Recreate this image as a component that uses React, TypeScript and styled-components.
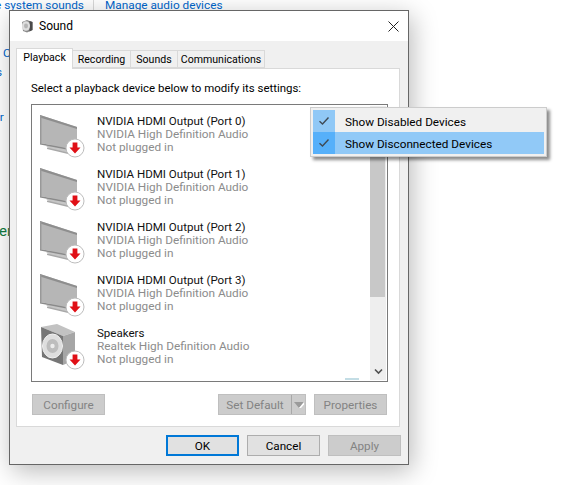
import React from "react";
import styled, { createGlobalStyle } from "styled-components";

const Global = createGlobalStyle`
  html, body { margin: 0; padding: 0; background: #fff; }
  * { box-sizing: border-box; }
`;

const font = `"Roboto", "Noto Sans", sans-serif`;

const Desktop = styled.div`
  position: relative;
  width: 568px;
  height: 485px;
  overflow: hidden;
  background: #fff;
  font-family: ${font};
  font-size: 12px;
`;

const BackText = styled.span<{ $x: number; $y: number; $size?: number; $color?: string }>`
  position: absolute;
  left: ${(p) => p.$x}px;
  top: ${(p) => p.$y}px;
  font-size: ${(p) => p.$size ?? 11.8}px;
  line-height: 16px;
  color: ${(p) => p.$color ?? "#0066cc"};
  white-space: nowrap;
`;

const BackDivider = styled.div`
  position: absolute;
  left: 93px;
  top: 0;
  width: 1px;
  height: 10px;
  background: #d9d9d9;
`;

const Dialog = styled.div`
  position: absolute;
  left: 9px;
  top: 10px;
  width: 400px;
  height: 455px;
  border: 1px solid #666;
  background: #f0f0f0;
  display: flex;
  flex-direction: column;
  box-shadow: 3px 6px 24px rgba(0, 0, 0, 0.28);
`;

const TitleBar = styled.div`
  height: 30px;
  background: #fff;
  display: flex;
  align-items: center;
  padding: 0 9px 0 10px;
  gap: 5px;
  flex: none;
`;

const TitleText = styled.div`
  flex: 1;
  font-size: 12px;
  color: #000;
`;

const Body = styled.div`
  flex: 1;
  display: flex;
  flex-direction: column;
  padding: 7px 8px 8px 6px;
`;

const TabStrip = styled.div`
  display: flex;
  align-items: flex-end;
  height: 20px;
  flex: none;
  position: relative;
  z-index: 1;
`;

const Tab = styled.div<{ $active?: boolean; $w: number }>`
  width: ${(p) => p.$w}px;
  height: ${(p) => (p.$active ? 21 : 18)}px;
  margin-bottom: ${(p) => (p.$active ? -1 : 0)}px;
  background: ${(p) => (p.$active ? "#fff" : "#f0f0f0")};
  border: 1px solid #d9d9d9;
  border-bottom: ${(p) => (p.$active ? "none" : "1px solid #d9d9d9")};
  border-left: ${(p) => (p.$active ? "1px solid #d9d9d9" : "none")};
  display: flex;
  align-items: center;
  justify-content: center;
  font-size: 10.6px;
  padding-bottom: ${(p) => (p.$active ? 3 : 0)}px;
  color: #000;
  white-space: nowrap;
`;

const Panel = styled.div`
  height: 359px;
  width: 384px;
  flex: none;
  background: #fff;
  border: 1px solid #d9d9d9;
  padding: 0 11px 0 14px;
  display: flex;
  flex-direction: column;
`;

const Prompt = styled.div`
  height: 35px;
  line-height: 17px;
  padding-top: 11px;
  flex: none;
  font-size: 11.45px;
  color: #000;
  white-space: nowrap;
`;

const DeviceList = styled.div`
  position: relative;
  width: 357px;
  height: 278px;
  flex: none;
  border: 1px solid #7a7a7a;
  display: flex;
  padding-right: 1px;
`;

const Rows = styled.div`
  flex: 1;
  display: flex;
  flex-direction: column;
  overflow: hidden;
`;

const Row = styled.div`
  height: 53px;
  flex: none;
  display: flex;
  padding-left: 6px;
  gap: 9px;
`;

const RowIcon = styled.svg`
  width: 50px;
  height: 50px;
  margin-top: 6px;
  flex: none;
`;

const RowText = styled.div`
  display: flex;
  flex-direction: column;
  padding-top: 10px;
`;

const RowLine = styled.div<{ $muted?: boolean }>`
  height: 13px;
  line-height: 13px;
  font-size: ${(p) => (p.$muted ? 11.8 : 11.55)}px;
  color: ${(p) => (p.$muted ? "#8c8c8c" : "#111")};
  white-space: nowrap;
`;

const SelectionPeek = styled.div`
  position: absolute;
  left: 313px;
  bottom: 1px;
  width: 14px;
  height: 2px;
  background: #c3dde5;
`;

const Scrollbar = styled.div`
  width: 16px;
  flex: none;
  margin: 1px 0;
  background: #eeeeee;
  display: flex;
  flex-direction: column;
`;

const ScrollCap = styled.div`
  height: 17px;
  flex: none;
`;

const Thumb = styled.div`
  height: 174px;
  flex: none;
  background: #c8c8c8;
  margin-right: 1px;
`;

const ScrollSpacer = styled.div`
  flex: 1;
`;

const ScrollDown = styled.div`
  height: 17px;
  flex: none;
  display: flex;
  align-items: center;
  justify-content: center;
`;

const ActionRow = styled.div`
  display: flex;
  align-items: center;
  margin-top: 12px;
  padding-left: 1px;
  width: 356px;
`;

const Button = styled.div<{ $w: number; $kind?: "disabled" | "default" | "normal" }>`
  width: ${(p) => p.$w}px;
  height: 21px;
  flex: none;
  display: flex;
  align-items: center;
  justify-content: center;
  font-size: 11.7px;
  background: ${(p) => (p.$kind === "disabled" ? "#cccccc" : "#e1e1e1")};
  color: ${(p) => (p.$kind === "disabled" ? "#838383" : "#000")};
  border: ${(p) =>
    p.$kind === "default"
      ? "2px solid #0078d7"
      : p.$kind === "normal"
      ? "1px solid #adadad"
      : "1px solid #bfbfbf"};
`;

const SplitButton = styled.div`
  width: 88px;
  height: 21px;
  flex: none;
  margin-left: 113px;
  margin-right: 8px;
  display: flex;
  align-items: center;
  background: #cccccc;
  border: 1px solid #bfbfbf;
  color: #838383;
  font-size: 11.7px;
`;

const SplitLabel = styled.div`
  width: 73px;
  height: 100%;
  flex: none;
  display: flex;
  align-items: center;
  justify-content: center;
  border-right: 1px solid #a8a8a8;
`;

const SplitArrow = styled.svg`
  width: 12px;
  height: 8px;
  margin-left: 1px;
  flex: none;
`;

const Footer = styled.div`
  display: flex;
  justify-content: flex-end;
  gap: 8px;
  margin-top: 8px;
  margin-right: -1px;
`;

const Menu = styled.div`
  position: absolute;
  left: 310px;
  top: 107px;
  width: 237px;
  height: 50px;
  padding: 2px;
  background: #f0f0f0;
  border: 1px solid #cccccc;
  box-shadow: 3px 3px 3px rgba(0, 0, 0, 0.45);
`;

const MenuRow = styled.div<{ $hot?: boolean }>`
  height: 22px;
  display: flex;
  align-items: center;
  background: ${(p) => (p.$hot ? "#91c9f7" : "transparent")};
  font-size: 11.75px;
  color: #000;
`;

const MenuCheck = styled.div<{ $hot?: boolean }>`
  width: 22px;
  height: 22px;
  flex: none;
  margin-right: 10px;
  display: flex;
  align-items: center;
  justify-content: center;
  background: ${(p) => (p.$hot ? "#56b0fa" : "#90c8f6")};
`;

const MenuLabel = styled.span`
  padding-top: 2px;
`;

const CheckIcon = () => (
  <svg width="12" height="10" viewBox="0 0 12 10" fill="none">
    <path d="M1.5 5.2 L4.5 8 L10.5 1.5" stroke="#3f4a55" strokeWidth="1.4" />
  </svg>
);

const Badge = () => (
  <g>
    <circle cx="37" cy="37" r="9" fill="#fff" stroke="#bdbdbd" strokeWidth="1" />
    <path d="M34.6 31.5 H39.4 V36.5 H42.5 L37 42.5 L31.5 36.5 H34.6 Z" fill="#e00f16" />
  </g>
);

const MonitorIcon = () => (
  <RowIcon viewBox="0 0 50 50">
    <path d="M8 35 L14 33 L29 37 L30 42 L12 38 Z" fill="#c6c6c6" />
    <path d="M9 36.5 L30 41.5 L30 43 L9 38 Z" fill="#a8a8a8" />
    <path d="M2 4 L39 16 L39 39 L2 32 Z" fill="#b6b6b6" />
    <path d="M2 4 L39 16 L39 18 L2 6.5 Z" fill="#8e8e8e" />
    <path d="M2 4 L2 32 L3.5 32.3 L3.5 5 Z" fill="#999" />
    <path d="M2 32 L39 39 L39 40.5 L2 33.5 Z" fill="#8a8a8a" />
    <Badge />
  </RowIcon>
);

const SpeakerIcon = () => (
  <RowIcon viewBox="0 0 50 50">
    <path d="M3 4 L19 1 L37 9 L25 13 Z" fill="#c2c2c2" />
    <path d="M3 4 L25 13 L25 42 L4 34 Z" fill="#767676" />
    <path d="M25 13 L37 9 L37 37 L25 42 Z" fill="#a6a6a6" />
    <ellipse cx="14.5" cy="23" rx="10" ry="12" fill="#dedede" stroke="#f2f2f2" />
    <ellipse cx="14.5" cy="23" rx="6" ry="7" fill="#bdbdbd" />
    <circle cx="14.5" cy="23" r="2.2" fill="#ececec" />
    <Badge />
  </RowIcon>
);

const TitleSpeaker = () => (
  <svg width="14" height="14" viewBox="0 0 14 14">
    <path d="M2 3 L7 1 L12.5 3 L12.5 11 L7 13.5 L3 12 Z" fill="#8a8a8a" />
    <path d="M9.5 2 L12.5 3 L12.5 11 L9.5 12.5 Z" fill="#4a4a4a" />
    <ellipse cx="6" cy="7" rx="4" ry="4.8" fill="#dedede" />
    <ellipse cx="6" cy="7" rx="2" ry="2.4" fill="#b4b4b4" />
  </svg>
);

const CloseIcon = () => (
  <svg width="11" height="11" viewBox="0 0 11 11" fill="none">
    <path d="M0.5 0.5 L10.5 10.5 M10.5 0.5 L0.5 10.5" stroke="#222" strokeWidth="1" />
  </svg>
);

const devices = [
  { name: "NVIDIA HDMI Output (Port 0)", driver: "NVIDIA High Definition Audio", speaker: false },
  { name: "NVIDIA HDMI Output (Port 1)", driver: "NVIDIA High Definition Audio", speaker: false },
  { name: "NVIDIA HDMI Output (Port 2)", driver: "NVIDIA High Definition Audio", speaker: false },
  { name: "NVIDIA HDMI Output (Port 3)", driver: "NVIDIA High Definition Audio", speaker: false },
  { name: "Speakers", driver: "Realtek High Definition Audio", speaker: true },
];

export default function App() {
  return (
    <Desktop>
      <Global />
      <BackText $x={-5} $y={-3}>e system sounds</BackText>
      <BackDivider />
      <BackText $x={105} $y={-3}>Manage audio devices</BackText>
      <BackText $x={3} $y={45}>C</BackText>
      <BackText $x={-4} $y={64}>s</BackText>
      <BackText $x={-7} $y={109}>or</BackText>
      <BackText $x={-1} $y={223} $size={15} $color="#107c41">er</BackText>
      <Dialog>
        <TitleBar>
          <TitleSpeaker />
          <TitleText>Sound</TitleText>
          <CloseIcon />
        </TitleBar>
        <Body>
          <TabStrip>
            <Tab $active $w={57}>Playback</Tab>
            <Tab $w={58}>Recording</Tab>
            <Tab $w={47}>Sounds</Tab>
            <Tab $w={87}>Communications</Tab>
          </TabStrip>
          <Panel>
            <Prompt>Select a playback device below to modify its settings:</Prompt>
            <DeviceList>
              <Rows>
                {devices.map((d) => (
                  <Row key={d.name}>
                    {d.speaker ? <SpeakerIcon /> : <MonitorIcon />}
                    <RowText>
                      <RowLine>{d.name}</RowLine>
                      <RowLine $muted>{d.driver}</RowLine>
                      <RowLine $muted>Not plugged in</RowLine>
                    </RowText>
                  </Row>
                ))}
              </Rows>
              <SelectionPeek />
              <Scrollbar>
                <ScrollCap />
                <Thumb />
                <ScrollSpacer />
                <ScrollDown>
                  <svg width="9" height="7" viewBox="0 0 9 7" fill="none">
                    <path d="M1 1.5 L4.5 5 L8 1.5" stroke="#505050" strokeWidth="1.6" />
                  </svg>
                </ScrollDown>
              </Scrollbar>
            </DeviceList>
            <ActionRow>
              <Button $w={73} $kind="disabled">Configure</Button>
              <SplitButton>
                <SplitLabel>Set Default</SplitLabel>
                <SplitArrow viewBox="0 0 12 8">
                  <path d="M1 1 H11 L6 7 Z" fill="#9a9a9a" />
                  <path d="M11 1 L6 7 L8 7 L11 3.5 Z" fill="#fff" />
                </SplitArrow>
              </SplitButton>
              <Button $w={73} $kind="disabled">Properties</Button>
            </ActionRow>
          </Panel>
          <Footer>
            <Button $w={73} $kind="default">OK</Button>
            <Button $w={73} $kind="normal">Cancel</Button>
            <Button $w={73} $kind="disabled">Apply</Button>
          </Footer>
        </Body>
      </Dialog>
      <Menu>
        <MenuRow>
          <MenuCheck><CheckIcon /></MenuCheck>
          <MenuLabel>Show Disabled Devices</MenuLabel>
        </MenuRow>
        <MenuRow $hot>
          <MenuCheck $hot><CheckIcon /></MenuCheck>
          <MenuLabel>Show Disconnected Devices</MenuLabel>
        </MenuRow>
      </Menu>
    </Desktop>
  );
}
